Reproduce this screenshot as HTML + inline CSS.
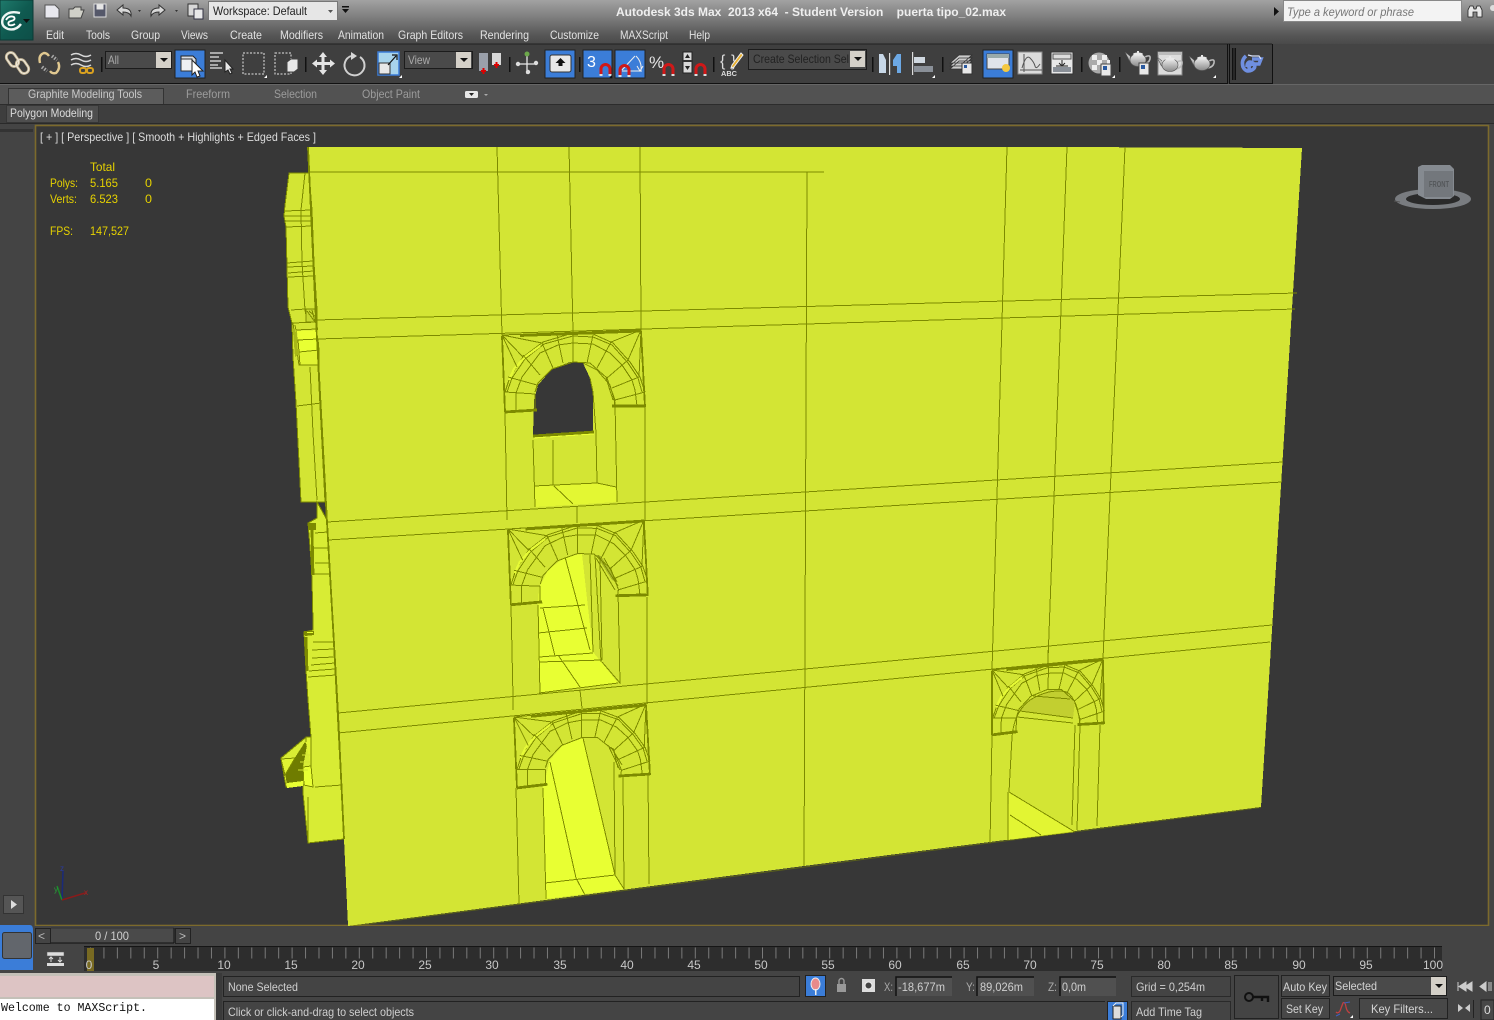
<!DOCTYPE html>
<html><head><meta charset="utf-8"><title>3ds Max</title>
<style>
html,body{margin:0;padding:0;background:#444;width:1494px;height:1020px;overflow:hidden}
svg{display:block}
text{font-family:"Liberation Sans",sans-serif;font-size:12px;white-space:pre}
.m{fill:#e2e2e2}
.r{fill:#9c9c9c}
.y{fill:#e6d200}
.l{fill:#c4c4c4}
.w{fill:none;stroke:#7d8a00;stroke-width:1;vector-effect:non-scaling-stroke}
.w2{fill:none;stroke:#7d8a00;stroke-width:1.800;vector-effect:non-scaling-stroke}
.t{fill:none;stroke:#7d8a00;stroke-width:2.800;vector-effect:non-scaling-stroke}
.h{fill:none;stroke:#e6fa36;stroke-width:2.200;vector-effect:non-scaling-stroke}
.d{fill:#4a4a4a;stroke:#1c1c1c}
.b{fill:#3b7dd8}
</style></head><body>
<svg xmlns="http://www.w3.org/2000/svg" width="1494" height="1020" viewBox="0 0 1494 1020">
<defs>
<linearGradient id="tb" x1="0" y1="0" x2="0" y2="1"><stop offset="0" stop-color="#a2a2a2"/><stop offset=".35" stop-color="#828282"/><stop offset=".8" stop-color="#565656"/><stop offset="1" stop-color="#4a4a4a"/></linearGradient>
<linearGradient id="app" x1="0" y1="0" x2="1" y2="1"><stop offset="0" stop-color="#1f7a6c"/><stop offset=".5" stop-color="#0f5a50"/><stop offset="1" stop-color="#0d4f48"/></linearGradient>
<linearGradient id="pot" x1="0" y1="0" x2="0" y2="1"><stop offset="0" stop-color="#f0f0f0"/><stop offset="1" stop-color="#8a8a8a"/></linearGradient>
<g id="teapot">
<path d="M-8,-4L-13,-8L-10,-2Q-9,1 -7,2" fill="url(#pot)" stroke="#555" stroke-width=".6"/>
<path d="M7,-3Q13,-6 12,-1Q11,3 6,4" fill="none" stroke="#bbb" stroke-width="1.600"/>
<ellipse cx="0" cy="0" rx="8" ry="6.500" fill="url(#pot)" stroke="#555" stroke-width=".6"/>
<ellipse cx="0" cy="-6" rx="5" ry="1.500" fill="#e8e8e8"/>
<rect x="-1" y="-9" width="2" height="2" fill="#e8e8e8"/>
</g>
<g id="magnet">
<path d="M0,11V5a4.500,4.500 0 0 1 9,0v6" fill="none" stroke="#d01818" stroke-width="3"/>
<path d="M-1.500,10h3v2h-3zM7.500,10h3v2h-3z" fill="#ddd"/>
</g>
<g id="arch">
<polyline class="w" points="505,392 510,377 523,357 543,342 573,333 593,334 613,343 630,362 640,377 645,392"/>
<polyline class="w" points="507,392 512,378 525,359 544,344 573,336 593,337 612,345 628,363 638,378 642,392"/>
<polyline class="h" points="509,380 514,369 525,357 540,346"/>
<polyline class="w" points="516,393 522,377 540,353 558,345 573,343 593,344 610,353 622,365 632,380 635,390"/>
<polyline class="w" points="535,392 538,383 552,369 573,362 590,363 607,378 615,400"/>
<path class="w" d="M505,392L535,394M508,377L537,385M523,355L540,375M542,343L553,368M557,335L563,363M573,333L573,362M593,335L587,363M611,342L597,368M628,360L607,378M639,377L612,388M645,392L615,400"/>
<path class="w" d="M502,335L523,357M502,335L517,367M502,335L542,343M641,330L611,342M641,330L628,360M641,330L639,377"/>
<path class="t" d="M520,335.500L641,331"/>
<path class="w" d="M502,335L641,330"/>
<path class="w" d="M516,393L516,411M535,394L535,410M635,390L637,406M615,400L614,406"/>
<path class="w2" d="M502,336L505,412M641,331L645,407"/>
<path class="t" d="M505,412L537,410M612,406L645,406"/>
</g>
</defs>

<!-- chrome backgrounds -->
<rect width="1494" height="1020" fill="#444"/>
<rect width="1494" height="44" fill="url(#tb)"/>
<rect x="0" y="44" width="1272" height="39" fill="#3f3f3f"/>
<rect x="1272" y="44" width="222" height="40" fill="#444"/>
<rect x="0" y="43.500" width="1272" height="1" fill="#222"/>
<rect x="0" y="83" width="1227" height="1" fill="#111"/>
<rect x="1230" y="83" width="42" height="1" fill="#111"/>
<rect x="1227" y="44" width="1" height="40" fill="#111"/>
<rect x="1229" y="44" width="1" height="40" fill="#111"/>
<rect x="1272" y="44" width="1" height="40" fill="#111"/>
<rect x="1232" y="48" width="1.500" height="32" fill="#111"/>
<rect x="1234.500" y="48" width="1.500" height="32" fill="#111"/>
<rect x="0" y="84" width="1494" height="20" fill="#525252"/>
<rect x="0" y="84" width="1494" height="1" fill="#666"/>
<rect x="0" y="104" width="1494" height="1" fill="#2c2c2c"/>
<rect x="0" y="105" width="1494" height="19" fill="#3e3e3e"/>
<rect x="0" y="123" width="1494" height="1" fill="#2a2a2a"/>

<!-- title bar -->
<rect x="0" y="0" width="33" height="40" fill="url(#app)" stroke="#0c3a35"/>
<path d="M20,13Q8,10 3,18Q0,26 8,29Q16,31 21,24" fill="none" stroke="#eef6f4" stroke-width="2.400"/>
<path d="M6,20Q9,15 14,17Q16,20 11,21Q7,22 9,25Q12,26 15,24" fill="none" stroke="#fff" stroke-width="1.800"/>
<path d="M23,19h7l-3.500,4z" fill="#111"/>
<path d="M45,5h10l4,4v9h-14z" fill="#e8e8ee" stroke="#555"/>
<path d="M69,9h4l2,-2h6v3h3l-3,8h-12z" fill="#d0d0c8" stroke="#444"/>
<rect x="94" y="4" width="12" height="13" fill="#55586a" stroke="#ddd"/><rect x="96.500" y="4.500" width="7" height="5" fill="#e6e6e6"/>
<path d="M117,10l6,-5v3q9,0 8,8q-2,-4 -8,-4v3z" fill="#d8d8d8" stroke="#333"/>
<path d="M138,10l3,0l-1.500,2z" fill="#333"/>
<path d="M165,10l-6,-5v3q-9,0 -8,8q2,-4 8,-4v3z" fill="#d8d8d8" stroke="#333"/>
<path d="M175,10l3,0l-1.500,2z" fill="#333"/>
<rect x="188" y="4" width="10" height="12" fill="#d8d8d8" stroke="#333"/><rect x="194" y="9" width="9" height="10" fill="#e8e8e8" stroke="#334"/>
<rect x="208.500" y="1.500" width="129" height="19" fill="#e6e6e6" stroke="#777"/>
<text x="213" y="15" fill="#222" textLength="94" lengthAdjust="spacingAndGlyphs">Workspace: Default</text>
<path d="M328,10h5l-2.500,3z" fill="#555"/>
<rect x="342" y="6" width="7" height="1.500" fill="#111"/><path d="M342,9h7l-3.500,4z" fill="#111"/>
<text x="616" y="16" fill="#efefef" textLength="390" lengthAdjust="spacingAndGlyphs" style="font-weight:bold;font-size:11.500px">Autodesk 3ds Max  2013 x64  - Student Version    puerta tipo_02.max</text>
<path d="M1274,7l5,4.500l-5,4.500z" fill="#111"/>
<rect x="1283.500" y="0.500" width="178" height="21" fill="#f3f3f3" stroke="#888"/>
<text x="1287" y="16" fill="#777" textLength="127" lengthAdjust="spacingAndGlyphs" style="font-style:italic">Type a keyword or phrase</text>
<path d="M1468,17v-7l2,-4h3l1,3h2l1,-3h3l2,4v7h-5v-5h-4v5z" fill="#e8e8e8" stroke="#222" stroke-width=".8"/>
<circle cx="1493" cy="8" r="3" fill="#ddd"/>

<!-- menu -->
<text class="m" x="46" y="39" textLength="18" lengthAdjust="spacingAndGlyphs">Edit</text>
<text class="m" x="86" y="39" textLength="24" lengthAdjust="spacingAndGlyphs">Tools</text>
<text class="m" x="131" y="39" textLength="29" lengthAdjust="spacingAndGlyphs">Group</text>
<text class="m" x="181" y="39" textLength="27" lengthAdjust="spacingAndGlyphs">Views</text>
<text class="m" x="230" y="39" textLength="32" lengthAdjust="spacingAndGlyphs">Create</text>
<text class="m" x="280" y="39" textLength="43" lengthAdjust="spacingAndGlyphs">Modifiers</text>
<text class="m" x="338" y="39" textLength="46" lengthAdjust="spacingAndGlyphs">Animation</text>
<text class="m" x="398" y="39" textLength="65" lengthAdjust="spacingAndGlyphs">Graph Editors</text>
<text class="m" x="480" y="39" textLength="49" lengthAdjust="spacingAndGlyphs">Rendering</text>
<text class="m" x="550" y="39" textLength="49" lengthAdjust="spacingAndGlyphs">Customize</text>
<text class="m" x="620" y="39" textLength="48" lengthAdjust="spacingAndGlyphs">MAXScript</text>
<text class="m" x="689" y="39" textLength="21" lengthAdjust="spacingAndGlyphs">Help</text>

<!-- toolbar -->
<g fill="none">
<rect x="8" y="52" width="9" height="15" rx="4.500" transform="rotate(-35 12.500 59.500)" stroke="#c8b898" stroke-width="2.800"/>
<rect x="18" y="59" width="9" height="15" rx="4.500" transform="rotate(-35 22.500 66.500)" stroke="#c8b898" stroke-width="2.800"/>
<rect x="8" y="52" width="9" height="15" rx="4.500" transform="rotate(-35 12.500 59.500)" stroke="#f0ece0" stroke-width="1"/>
<rect x="18" y="59" width="9" height="15" rx="4.500" transform="rotate(-35 22.500 66.500)" stroke="#f0ece0" stroke-width="1"/>
<path d="M40,63Q38,55 44,53Q47,53 49,56M58,62Q61,68 56,73Q52,74 50,71" stroke="#e0c890" stroke-width="2.400"/>
<path d="M52,56l5,4M42,67l5,4" stroke="#aaa" stroke-width="3.500" stroke-dasharray="1.500 1.500"/>
<path d="M71,55q5,-3 10,0t10,0M71,60q5,-3 10,0t10,0M71,65q5,-3 10,0t10,0" stroke="#d8d8d8" stroke-width="1.500"/>
<rect x="80" y="68" width="6" height="5" rx="2" stroke="#d8a020" stroke-width="2"/><rect x="87" y="68" width="6" height="5" rx="2" stroke="#d8a020" stroke-width="2"/>
</g>
<rect x="101" y="57" width="1.500" height="15" fill="#111"/>
<rect class="d" x="105.500" y="51.500" width="66" height="17"/>
<text x="108" y="64" fill="#aaa" textLength="11" lengthAdjust="spacingAndGlyphs">All</text>
<rect x="156" y="52" width="15" height="16" fill="#d4d0c8"/><path d="M160,58h8l-4,4z" fill="#111"/>
<rect class="b" x="175" y="50" width="30" height="28" stroke="#222"/>
<path d="M181,56h12l3,3v12h-15z" fill="#d8dde4" stroke="#222"/><rect x="181" y="59" width="11" height="12" fill="#eef0f4" stroke="#333"/>
<path d="M192,60v15l3,-3l2,5l3,-1l-2,-5h5z" fill="#fff" stroke="#222"/>
<path d="M210,53h13M210,57h9M210,61h11M210,65h8M210,68h12" stroke="#e6e6e6" stroke-width="1.200"/>
<path d="M225,60v12l3,-2l2,4l2,-1l-2,-4h3z" fill="#e8e8e8" stroke="#222"/>
<rect x="243" y="53" width="21" height="21" fill="none" stroke="#e6e6e6" stroke-dasharray="2 1.500"/>
<path d="M264,78l3,-3v3z" fill="#fff"/>
<rect x="275" y="53" width="16" height="21" fill="none" stroke="#e6e6e6" stroke-dasharray="2 1.500"/>
<path d="M287,62l4,-3h7v10l-4,3h-7z" fill="#e8e8e8" stroke="#444"/>
<rect x="305" y="57" width="1.500" height="15" fill="#111"/>
<g fill="#e4e4e4"><path d="M323,52l4,5h-8zM323,75l4,-5h-8zM312,63.500l5,-4v8zM335,63.500l-5,-4v8z"/><rect x="321.500" y="57" width="3" height="13"/><rect x="316" y="62" width="14" height="3"/></g>
<path d="M351,56a10,10 0 1 0 9,1" fill="none" stroke="#d0d0d0" stroke-width="2"/><path d="M351,52l6,4l-6,4z" fill="#d8d8d8"/>
<rect x="378" y="52" width="21" height="23" fill="#a8d4ec" stroke="#3b7dd8" stroke-width="1.500"/>
<rect x="379" y="63" width="11" height="11" fill="#e8e8e8" stroke="#333"/><path d="M388,65l8,-9M392,55h5v5" stroke="#111" fill="none" stroke-width="1.200"/>
<path d="M399,78l3,-3v3z" fill="#fff"/>
<rect class="d" x="404.500" y="51.500" width="68" height="17"/>
<text x="408" y="64" fill="#aaa" textLength="22" lengthAdjust="spacingAndGlyphs">View</text>
<rect x="456" y="52" width="15" height="16" fill="#d4d0c8"/><path d="M460,58h8l-4,4z" fill="#111"/>
<rect x="479" y="53" width="9" height="18" fill="#9aa0aa"/><path d="M483.500,68v6M481,71h5" stroke="#d00" stroke-width="2"/>
<rect x="492" y="53" width="9" height="12" fill="#d8d8d8"/><path d="M496.500,62v6M494,65h5" stroke="#d00" stroke-width="2"/>
<rect x="509" y="57" width="1.500" height="15" fill="#111"/>
<path d="M527,54v20M517,64h20" stroke="#e8e8e8" stroke-width="1.300"/><circle cx="527" cy="54" r="2.500" fill="#6ca84a"/><circle cx="518" cy="64" r="2.200" fill="#ddd"/><circle cx="536" cy="63" r="2.200" fill="#ddd"/><circle cx="528" cy="72" r="2.200" fill="#ddd"/>
<rect class="b" x="545" y="50" width="30" height="28" stroke="#222"/>
<rect x="550" y="55" width="21" height="17" rx="2" fill="#e8e8e8" stroke="#333"/><path d="M560.500,58l5,5h-3v3h-4v-3h-3z" fill="#111"/>
<rect x="579" y="57" width="1.500" height="15" fill="#111"/>
<rect class="b" x="583" y="50" width="29" height="28" stroke="#222"/>
<text x="587" y="67" fill="#fff" style="font-size:16px">3</text>
<use href="#magnet" x="601" y="64"/>
<path d="M609,78l3,-3v3z" fill="#111"/>
<rect class="b" x="615" y="50" width="30" height="28" stroke="#222"/>
<path d="M622,70l13,-14M622,71h20M636,56q6,6 5,14M637,66l3,5l3,-5" fill="none" stroke="#eee" stroke-width="1"/>
<use href="#magnet" x="620" y="65"/>
<text x="649" y="68" fill="#e4e4e4" style="font-size:17px">%</text>
<use href="#magnet" x="664" y="64"/>
<rect x="683" y="52" width="9" height="21" fill="#d8d8d8" stroke="#222"/><path d="M685,58l2.500,-4l2.500,4zM685,66l2.500,4l2.500,-4z" fill="#222"/><rect x="683" y="60" width="9" height="2" fill="#333"/>
<use href="#magnet" x="696" y="64"/>
<rect x="713" y="57" width="1.500" height="15" fill="#111"/>
<text x="720" y="66" fill="#ddd" style="font-size:16px">{</text><text x="731" y="66" fill="#ddd" style="font-size:16px">}</text>
<path d="M732,65l9,-12l2,2l-9,12l-3,1z" fill="#e8b030" stroke="#eee"/>
<text x="721" y="76" fill="#ddd" textLength="16" lengthAdjust="spacingAndGlyphs" style="font-size:7px;font-weight:bold">ABC</text>
<rect class="d" x="748.500" y="49.500" width="118" height="20"/>
<text x="753" y="63" fill="#222" textLength="96" lengthAdjust="spacingAndGlyphs">Create Selection Sel</text>
<rect x="850" y="51" width="15" height="16" fill="#d4d0c8"/><path d="M854,57h8l-4,4z" fill="#111"/>
<rect x="872" y="57" width="1.500" height="15" fill="#111"/>
<path d="M879,54h4l3,6v13h-7z" fill="#c8d8e8"/><rect x="889" y="53" width="1.200" height="22" fill="#ddd"/><path d="M901,54h-4l-4,6v6h4v7h4z" fill="#6ca8e4"/>
<rect x="912" y="52" width="1.200" height="23" fill="#ddd"/><rect x="914" y="57" width="11" height="6" fill="#d0d8e0"/><rect x="914" y="66" width="19" height="6" fill="#8a9098"/>
<path d="M932,78l3,-3v3z" fill="#fff"/>
<rect x="942" y="57" width="1.500" height="15" fill="#111"/>
<path d="M950,63l9,-8h13l-9,8zM950,66l9,-8h13l-9,8zM950,69l9,-8h13l-9,8z" fill="#ccc" stroke="#333" stroke-width=".8"/><rect x="962" y="63" width="10" height="11" fill="#e8e8e8" stroke="#333"/><rect x="964" y="65" width="3" height="3" fill="#2a5aa0"/>
<rect class="b" x="983" y="50" width="30" height="28" stroke="#222"/>
<rect x="987" y="54" width="22" height="15" fill="#e0e4ea" stroke="#444"/><rect x="987" y="54" width="22" height="4" fill="#9aa"/><circle cx="1006" cy="68" r="4" fill="#f4c840"/>
<rect x="1018" y="52" width="24" height="22" fill="#dcdcdc" stroke="#888"/><path d="M1022,68q4,-14 8,-10t5,8t5,-2M1024,54v18M1020,70h22" fill="none" stroke="#555"/>
<rect x="1051" y="52" width="22" height="22" fill="#e8e8e8" stroke="#333"/><rect x="1053" y="54" width="18" height="5" fill="#ddd" stroke="#555"/><rect x="1053" y="67" width="18" height="5" fill="#8a9098"/><path d="M1062,60v5M1059,63l3,3l3,-3M1056,66h12" fill="none" stroke="#222"/>
<rect x="1081" y="57" width="1.500" height="15" fill="#111"/>
<circle cx="1099" cy="63" r="10.500" fill="#aaa"/><path d="M1092,55h5v5h-5zM1102,55h5v5h-5zM1097,60h5v5h-5zM1107,60h3v5h-3zM1092,65h5v5h-5zM1102,65h5v5h-5z" fill="#eee"/>
<rect x="1101" y="64" width="10" height="12" fill="#e8e8e8" stroke="#444"/><rect x="1103" y="66" width="4" height="4" fill="#2a5aa0"/>
<path d="M1112,78l3,-3v3z" fill="#fff"/>
<rect x="1119" y="57" width="1.500" height="15" fill="#111"/>
<use href="#teapot" x="1138" y="60"/>
<rect x="1139" y="63" width="10" height="12" fill="#e8e8e8" stroke="#444"/><rect x="1141" y="65" width="4" height="4" fill="#2a5aa0"/>
<rect x="1158" y="52" width="24" height="23" fill="#dcdcdc" stroke="#888"/><rect x="1158" y="52" width="24" height="3" fill="#bbb"/>
<use href="#teapot" x="1170" y="65"/>
<use href="#teapot" x="1202" y="64"/>
<path d="M1213,78l3,-3v3z" fill="#fff"/>
<path d="M1246,56q-5,4 -3,11q3,6 9,3q5,-3 1,-7q-6,-3 -6,4M1252,59h9l-2,5h-6q-6,1 -3,6" fill="none" stroke="#6f8fe0" stroke-width="3.600"/>
<path d="M1248,55l4,1h7l2,3" fill="none" stroke="#d8e0f8" stroke-width="1.200"/>

<!-- ribbon -->
<path d="M8.500,104V88.500H163.500V104" fill="#5c5c5c" stroke="#333"/>
<text x="28" y="98" fill="#c8c8c8" textLength="114" lengthAdjust="spacingAndGlyphs">Graphite Modeling Tools</text>
<text class="r" x="186" y="98" textLength="44" lengthAdjust="spacingAndGlyphs">Freeform</text>
<text class="r" x="274" y="98" textLength="43" lengthAdjust="spacingAndGlyphs">Selection</text>
<text class="r" x="362" y="98" textLength="58" lengthAdjust="spacingAndGlyphs">Object Paint</text>
<rect x="465" y="91" width="13" height="7" rx="1.500" fill="#e8e8e8"/><path d="M469,93h5l-2.500,3z" fill="#222"/><path d="M484,94h4l-2,2z" fill="#aaa"/>
<rect x="6.500" y="105.500" width="92" height="17" fill="#4e4e4e" stroke="#363636"/>
<text x="10" y="117" fill="#dcdcdc" textLength="83" lengthAdjust="spacingAndGlyphs">Polygon Modeling</text>

<!-- left column -->
<rect x="0" y="124" width="35" height="806" fill="#444"/>
<rect x="0" y="129" width="33" height="3" fill="#333"/>
<rect x="3.500" y="895.500" width="20" height="18" fill="#555" stroke="#333"/><path d="M11,900l6,4.500l-6,4.500z" fill="#ddd"/>

<!-- viewport -->
<rect x="36" y="126" width="1452" height="799" fill="#373737"/>
<rect x="35.500" y="125.500" width="1453" height="800" fill="none" stroke="#7c6a2c" stroke-width="1.600"/>
<text x="40" y="141" fill="#dcdcdc" textLength="276" lengthAdjust="spacingAndGlyphs">[ + ] [ Perspective ] [ Smooth + Highlights + Edged Faces ]</text>
<text class="y" x="90" y="171" textLength="25" lengthAdjust="spacingAndGlyphs">Total</text>
<text class="y" x="50" y="187" textLength="28" lengthAdjust="spacingAndGlyphs">Polys:</text>
<text class="y" x="90" y="187" textLength="28" lengthAdjust="spacingAndGlyphs">5.165</text>
<text class="y" x="145" y="187" textLength="7" lengthAdjust="spacingAndGlyphs">0</text>
<text class="y" x="50" y="203" textLength="27" lengthAdjust="spacingAndGlyphs">Verts:</text>
<text class="y" x="90" y="203" textLength="28" lengthAdjust="spacingAndGlyphs">6.523</text>
<text class="y" x="145" y="203" textLength="7" lengthAdjust="spacingAndGlyphs">0</text>
<text class="y" x="50" y="235" textLength="23" lengthAdjust="spacingAndGlyphs">FPS:</text>
<text class="y" x="90" y="235" textLength="39" lengthAdjust="spacingAndGlyphs">147,527</text>

<!-- view cube -->
<ellipse cx="1433" cy="199" rx="38" ry="10" fill="#797c80"/><ellipse cx="1433" cy="199" rx="27" ry="6" fill="#2a2a2a"/>
<path d="M1394,201l6,1" stroke="#555"/>
<path d="M1418,167l4,-2h28l4,4v27l-4,3h-24l-8,-4z" fill="#858a90"/>
<rect x="1424" y="171" width="29" height="26" fill="#73777c"/>
<text x="1429" y="187" fill="#54575a" textLength="20" lengthAdjust="spacingAndGlyphs" style="font-size:8px;font-weight:bold">FRONT</text>

<!-- axis gizmo -->
<path d="M62,900L63,871" stroke="#1a2a7a" stroke-width="1.500"/><path d="M62,900L57,886" stroke="#1a8a2a" stroke-width="1.500"/><path d="M62,900L85,893" stroke="#8a1a1a" stroke-width="1.500"/>
<text x="60" y="871" fill="#2a3aa0" style="font-size:8px">z</text><text x="54" y="892" fill="#2a9a3a" style="font-size:8px">y</text><text x="84" y="895" fill="#b02020" style="font-size:8px">x</text>

<!-- model -->
<g shape-rendering="crispEdges">
<polygon points="289,173 309,173 316,320 318,367 325,502 301,502 296,403 293,357 292,323 288,307 286,227 284,216 285,205" fill="#d3e534" stroke="#7d8a00"/>
<polygon points="317,502 327,520 344,839 308,843 303,793 303,785 286,787 281,758 305,738 311,737 308,700 306,670 304,632 313,630 313,623 312,580 311,560 308,523 317,518" fill="#d8ec34" stroke="#7d8a00"/>
<polygon points="308,147 1058,147 1302,148 1261,807 804,866 348,926 344,839 338,733 338,713 328,540 327,522 318,339 316,320" fill="#d3e534"/>

<!-- wing details -->
<path class="w" d="M285,211L312,210M284,216L312,216M285,221L312,221M286,227L312,226M287,263L313,261M287,267L314,266M288,273L314,271M288,277L314,276M291,310L306,309M297,406L321,403M305,173L301,210L302,263L305,310L307,321M309,173L312,210L314,263L317,310M310,367L313,433L317,500M315,533L328,532M314,548L329,548M315,563L330,563M313,574L330,574M312,580L313,623M313,642L333,642M312,650L334,649M312,658L334,657M311,665L335,663M309,671L335,669M308,677L336,675M315,787L342,785M308,797L308,843"/>
<rect x="306" y="309" width="11" height="13" fill="#c6d830" stroke="#7d8a00"/>
<path class="w" d="M307,311L315,322M309,311L317,318M312,310L315,322"/>
<polygon points="293,323 317,322 319,365 299,365" fill="#d3e534" stroke="#7d8a00"/>
<polygon points="297,331 318,330 318,339 298,339" fill="#ecff33"/>
<polygon points="298,340 318,339 319,350 299,352" fill="#e8ff33" stroke="#7d8a00"/>
<polygon points="299,352 319,350 319,365 300,365" fill="#e0f433" stroke="#7d8a00"/>
<polygon points="293,332 297,331 298,355 295,357" fill="#a8b818"/>
<path class="w" d="M295,325L296,330L317,329"/>
<polygon points="308,523 316,523 316,530 309,530" fill="#7d8a00"/>
<polygon points="304,631 314,631 314,635 305,636" fill="#7d8a00"/>
<rect x="307" y="632" width="6" height="1" fill="#e8ff33"/>
<path class="t" d="M312,530L313,575M306,637L307,671"/>
<polygon points="285,773 305,742 307,745 303,767 303,783 287,785" fill="#6f7c00"/>
<polygon points="281,759 295,758 285,775" fill="#e0f433" stroke="#7d8a00"/>
<polygon points="287,783 303,781 303,786 287,788" fill="#e8ff33"/>
<polygon points="303,767 311,766 313,787 304,785" fill="#e8ff33" stroke="#7d8a00"/>
<path d="M306,742V737h5v30" fill="#e0f433" stroke="#7d8a00"/>
<path d="M302,755h8M300,762h10M298,770h10" stroke="#d3e534" fill="none"/>

<!-- openings (fills) -->
<polygon points="533,435 534,400 538,385 552,369 570,362 583,363 590,378 593,392 593,433" fill="#373737"/>
<polygon points="534,486 597,483 616,487 617,502 535,507" fill="#e3f733"/>
<polygon points="539,588 548,570 565,557 582,554 593,652 602,663 618,683 540,693 538,653 538,610" fill="#e8ff33"/>
<polygon points="550,760 563,745 583,738 615,875 624,889 545,899 545,883 543,788" fill="#e8ff33"/>
<polygon points="1030,700 1050,690 1067,692 1075,702 1073,718 1020,711" fill="#c2cf30"/>
<polygon points="1009,792 1075,832 1008,840" fill="#e2f533"/>
<polygon points="596,555 601,556 617,582 612,580" fill="#aab82c"/>

<!-- long lines -->
<path class="w" d="M308,172L824,172M316,320L1297,293M318,339L1295,309M327,522L1283,462M328,540L1282,482M338,713L1272,625M338,733L1270,642"/>
<path class="w" d="M497,147L502,335M569,147L573,333M640,147L641,330M807,172L804,866M1007,147L992,670M1067,147L1048,660M1125,147L1103,659"/>
<path class="w2" d="M308,147L316,320L327,522L338,713L344,839"/>
<path class="w" d="M505,412L507,520M645,407L645,520M577,507L577,523M580,690L582,708M513,697L513,710M644,520L644,530M647,597L647,704"/>
<path class="w" d="M992,735L990,843M1100,725L1097,826M1080,725L1077,830M1048,650L1048,663"/>

<!-- arches -->
<use href="#arch"/>
<use href="#arch" transform="matrix(.978 -.029 0 .985 17 213.600)"/>
<use href="#arch" transform="matrix(.95 -.06 .002 .924 36.400 437.600)"/>
<use href="#arch" transform="matrix(.798 -.049 -.031 .845 601.800 411.500)"/>

<!-- arch 1 interior -->
<path class="t" d="M533,436L594,432"/>
<path d="M534,438L594,434" stroke="#ecff33" fill="none" stroke-dasharray="12 4"/>
<path class="w" d="M533,440L535,507M596,433L597,483M615,403L617,502M553,440L553,485M534,486L597,483L616,487M554,486L573,504M593,392L596,433M583,363L597,370L610,385L615,403M590,378L593,392"/>
<path class="w" d="M606,378L613,400"/>
<!-- arch 2 interior -->
<path class="w" d="M538,605L540,693M565,557L590,650M540,608L585,605M538,633L587,628M539,657L593,653M540,662L602,660M558,655L580,687M543,608L555,656M590,555L593,652M595,555L601,662M600,558L602,660M618,590L620,683L602,662M539,693L618,683M511,605L513,697M604,558L617,582"/>
<path class="w" d="M598,555L618,586M596,558L615,590"/>
<!-- arch 3 interior -->
<path class="w" d="M550,762L576,878M583,738L615,875M545,883L615,875M576,878L585,895M615,875L624,889M614,762L615,875M623,777L624,889M516,788L519,904M543,788L546,899M648,775L649,884"/>
<path class="w" d="M608,745L620,770M611,747L622,765M613,748L618,768"/>
<!-- arch 4 interior -->
<path class="w" d="M1033,696L1070,699M1020,711L1073,718M1017,717L1073,723M1012,737L1009,792M1075,725L1072,825M1009,792L1075,832M1010,815L1041,835M1008,792L1008,840"/>
<path class="w" d="M1012,737Q1014,712 1030,700Q1050,688 1067,692Q1078,700 1080,725"/>
</g>
<polygon points="348,926 1261,807 1261,808 349,927" fill="#7d8a00" opacity=".5"/>

<!-- lower chrome -->
<rect x="35" y="926" width="1459" height="20" fill="#444"/>
<rect x="35.500" y="928.500" width="15" height="15" fill="#444" stroke="#222"/>
<text x="38" y="940" fill="#bbb">&lt;</text>
<rect x="51" y="928" width="123" height="15" fill="#4a4a4a"/>
<path d="M51,943h123" stroke="#111"/><path d="M51,928h123" stroke="#333"/><path d="M174,928v15" stroke="#111"/>
<text x="95" y="940" fill="#cfcfcf" textLength="34" lengthAdjust="spacingAndGlyphs">0 / 100</text>
<rect x="175.500" y="928.500" width="15" height="15" fill="#444" stroke="#222"/>
<text x="179" y="940" fill="#bbb">&gt;</text>

<path d="M0,925H30Q33,925 33,930V970H0z" fill="#3b7dd8"/>
<rect x="2.500" y="932.500" width="29" height="26" rx="2" fill="#62666c" stroke="#333"/>

<rect x="33" y="946" width="51" height="25" fill="#444"/>
<rect x="47" y="952" width="17" height="4" fill="#ddd" stroke="#555" stroke-width=".5"/>
<path d="M51,957v5M49,959l2,-2l2,2M60,957v5M58,960l2,2l2,-2" stroke="#ddd" fill="none"/>
<rect x="47" y="963" width="17" height="3" fill="#ddd"/>

<rect x="84" y="946" width="1358" height="25" fill="#2d2d2d"/>
<rect x="84" y="946" width="1358" height="1" fill="#161616"/>
<line x1="90" y1="953" x2="1442" y2="953" stroke="#7a7a7a" stroke-width="11" stroke-dasharray="1 12.440"/>
<rect x="87" y="948" width="7" height="23" fill="#786a22"/>
<g fill="#c8c8c8" text-anchor="middle">
<text x="89" y="969">0</text><text x="156" y="969">5</text><text x="224" y="969">10</text><text x="291" y="969">15</text><text x="358" y="969">20</text><text x="425" y="969">25</text><text x="492" y="969">30</text><text x="560" y="969">35</text><text x="627" y="969">40</text><text x="694" y="969">45</text><text x="761" y="969">50</text><text x="828" y="969">55</text><text x="895" y="969">60</text><text x="963" y="969">65</text><text x="1030" y="969">70</text><text x="1097" y="969">75</text><text x="1164" y="969">80</text><text x="1231" y="969">85</text><text x="1299" y="969">90</text><text x="1366" y="969">95</text><text x="1433" y="969">100</text>
</g>

<!-- script listener -->
<rect x="0" y="973" width="216" height="47" fill="#c4c0b8"/>
<rect x="0" y="976" width="214" height="21" fill="#ddc4c4"/>
<rect x="0" y="999" width="214" height="21" fill="#fff"/>
<text x="1" y="1011" fill="#111" textLength="146" lengthAdjust="spacingAndGlyphs" style="font-family:'Liberation Mono',monospace;font-size:12px">Welcome to MAXScript.</text>
<rect x="216" y="973" width="6" height="47" fill="#3a3a3a"/>

<!-- status -->
<rect x="223.500" y="976.500" width="576" height="20" fill="#444" stroke="#222"/>
<text x="228" y="991" fill="#cfcfcf" textLength="70" lengthAdjust="spacingAndGlyphs">None Selected</text>
<path d="M223.500,1020V1001.500H1105" fill="#444" stroke="#222"/>
<text x="228" y="1016" fill="#cfcfcf" textLength="186" lengthAdjust="spacingAndGlyphs">Click or click-and-drag to select objects</text>

<rect class="b" x="805.500" y="975.500" width="20" height="21" stroke="#222"/>
<ellipse cx="815.500" cy="984" rx="4.500" ry="6" fill="#e88a8a" stroke="#eee"/><rect x="815" y="989" width="1.500" height="6" fill="#eee"/>
<rect x="837" y="984" width="9" height="8" fill="#999"/><path d="M839,984v-3a2.500,2.500 0 0 1 5,0v3" fill="none" stroke="#999" stroke-width="1.400"/>
<rect x="862" y="979" width="13" height="13" fill="#ddd"/><circle cx="868.500" cy="985.500" r="3.500" fill="#444" stroke="#eee"/>
<text x="884" y="991" fill="#aaa" textLength="9" lengthAdjust="spacingAndGlyphs">X:</text>
<rect x="896" y="977" width="56" height="19" fill="#505050"/><path d="M896,996V977H952" fill="none" stroke="#111" stroke-width="1.500"/>
<text x="898" y="991" fill="#cfcfcf" textLength="47" lengthAdjust="spacingAndGlyphs">-18,677m</text>
<text x="966" y="991" fill="#aaa" textLength="9" lengthAdjust="spacingAndGlyphs">Y:</text>
<rect x="977" y="977" width="57" height="19" fill="#505050"/><path d="M977,996V977H1034" fill="none" stroke="#111" stroke-width="1.500"/>
<text x="980" y="991" fill="#cfcfcf" textLength="43" lengthAdjust="spacingAndGlyphs">89,026m</text>
<text x="1048" y="991" fill="#aaa" textLength="9" lengthAdjust="spacingAndGlyphs">Z:</text>
<rect x="1060" y="977" width="56" height="19" fill="#505050"/><path d="M1060,996V977H1116" fill="none" stroke="#111" stroke-width="1.500"/>
<text x="1062" y="991" fill="#cfcfcf" textLength="24" lengthAdjust="spacingAndGlyphs">0,0m</text>
<rect x="1131.500" y="976.500" width="99" height="20" fill="#444" stroke="#2a2a2a"/>
<text x="1136" y="991" fill="#cfcfcf" textLength="69" lengthAdjust="spacingAndGlyphs">Grid = 0,254m</text>
<rect class="b" x="1107.500" y="1001.500" width="20" height="20" stroke="#222"/>
<path d="M1113,1006h8v13h-8z" fill="#ddd" stroke="#222"/><path d="M1113,1006l3,-3h7v12l-2,2" fill="none" stroke="#eee"/>
<rect x="1131.500" y="1001.500" width="99" height="20" fill="#444" stroke="#2a2a2a"/>
<text x="1136" y="1016" fill="#cfcfcf" textLength="66" lengthAdjust="spacingAndGlyphs">Add Time Tag</text>
<rect x="1234.500" y="975.500" width="44" height="43" fill="#444" stroke="#222"/>
<circle cx="1249" cy="997" r="4" fill="none" stroke="#111" stroke-width="2"/><path d="M1253,997h15v5M1262,997v4" fill="none" stroke="#111" stroke-width="2.400"/>
<rect x="1281.500" y="975.500" width="48" height="21" fill="#484848" stroke="#222"/>
<text x="1283" y="991" fill="#d4d4d4" textLength="44" lengthAdjust="spacingAndGlyphs">Auto Key</text>
<rect x="1281.500" y="998.500" width="48" height="20" fill="#484848" stroke="#222"/>
<text x="1286" y="1013" fill="#d4d4d4" textLength="37" lengthAdjust="spacingAndGlyphs">Set Key</text>
<rect class="d" x="1333.500" y="976.500" width="113" height="19"/>
<text x="1335" y="990" fill="#d4d4d4" textLength="42" lengthAdjust="spacingAndGlyphs">Selected</text>
<rect x="1431" y="977" width="15" height="18" fill="#d4d0c8"/><path d="M1435,984h8l-4,4z" fill="#111"/>
<path d="M1336,1012q2,2 4,-1l3,-8q2,-2 3,4q1,5 4,6" fill="none" stroke="#c04040" stroke-width="1.300"/><path d="M1336,1016l4,-2M1344,1003l6,-1" stroke="#4060c0"/>
<path d="M1350,1018l3,-3v3z" fill="#fff"/>
<rect x="1359.500" y="998.500" width="88" height="20" fill="#484848" stroke="#222"/>
<text x="1371" y="1013" fill="#d4d4d4" textLength="62" lengthAdjust="spacingAndGlyphs">Key Filters...</text>
<path d="M1458,982v9M1466,982l-7,4.500l7,4.500zM1472,982l-7,4.500l7,4.500z" fill="#ccc" stroke="#ccc"/>
<path d="M1486,982l-6,4.500l6,4.500zM1489,982v9M1491,982v9" fill="#ccc" stroke="#ccc"/>
<path d="M1458,1004l5,4l-5,4zM1470,1004l-5,4l5,4z" fill="#ccc"/>
<rect x="1473" y="1000" width="1" height="18" fill="#222"/>
<rect x="1481" y="1000" width="13" height="20" fill="#484848" stroke="#222"/>
<text x="1484" y="1014" fill="#ddd">0</text>
</svg>
</body></html>
